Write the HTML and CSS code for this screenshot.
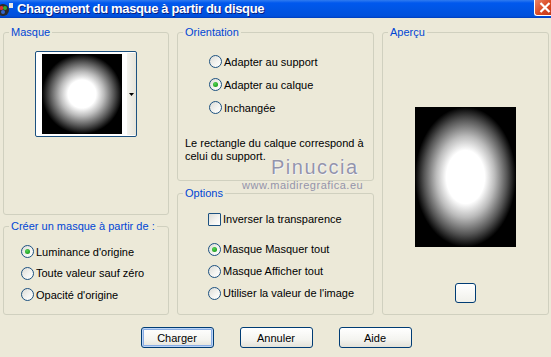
FILE: index.html
```html
<!DOCTYPE html>
<html lang="fr">
  <head>
    <meta charset="UTF-8" />
    <title>Chargement du masque à partir du disque</title>
    <link rel="stylesheet" href="styles.css">
  </head>
  <body>
    <div class="window">
      <div class="titlebar">
        <svg class="app-icon" width="15" height="15" viewBox="0 0 15 15">
          <circle cx="5" cy="8" r="6" fill="#2a2a2a" />
          <circle cx="3.5" cy="6" r="2" fill="#d33" />
          <circle cx="7" cy="6" r="2" fill="#3a3" />
          <circle cx="5" cy="10" r="2" fill="#36c" />
          <rect x="11" y="1" width="4" height="5" fill="#e8e8e8" />
        </svg>
        <span class="title">Chargement du masque à partir du disque</span>
        <div class="close-btn">
          <svg width="12" height="11" viewBox="0 0 12 11">
            <path d="M1.5 1 L10.5 10 M10.5 1 L1.5 10" stroke="#fff" stroke-width="2.2" />
          </svg>
        </div>
      </div>

      <div class="dialog">
        <div class="columns">
          <!-- left column -->
          <div class="col col-left">
            <fieldset class="group group-masque">
              <legend>Masque</legend>
              <div class="mask-picker">
                <div class="mask-thumb"></div>
                <div class="mask-drop">
                  <svg width="5" height="3" viewBox="0 0 5 3"><path d="M0 0 H5 L2.5 3 Z" fill="#000" /></svg>
                </div>
              </div>
            </fieldset>
            <fieldset class="group group-source">
              <legend>Créer un masque à partir de :</legend>
              <div class="group-body">
                <label class="option"><span class="radio checked"></span>Luminance d'origine</label>
                <label class="option"><span class="radio"></span>Toute valeur sauf zéro</label>
                <label class="option"><span class="radio"></span>Opacité d'origine</label>
              </div>
            </fieldset>
          </div>

          <!-- middle column -->
          <div class="col col-mid">
            <fieldset class="group group-orient">
              <legend>Orientation</legend>
              <div class="group-body">
                <label class="option"><span class="radio"></span>Adapter au support</label>
                <label class="option"><span class="radio checked"></span>Adapter au calque</label>
                <label class="option"><span class="radio"></span>Inchangée</label>
              </div>
              <p class="note">Le rectangle du calque correspond à<br>celui du support.</p>
            </fieldset>
            <fieldset class="group group-options">
              <legend>Options</legend>
              <div class="group-body">
                <label class="option option-check"><span class="checkbox"></span>Inverser la transparence</label>
                <label class="option"><span class="radio checked"></span>Masque Masquer tout</label>
                <label class="option"><span class="radio"></span>Masque Afficher tout</label>
                <label class="option"><span class="radio"></span>Utiliser la valeur de l'image</label>
              </div>
            </fieldset>
          </div>

          <!-- right column -->
          <div class="col col-right">
            <fieldset class="group group-preview">
              <legend>Aperçu</legend>
              <div class="preview"></div>
              <button class="tiny-btn"></button>
            </fieldset>
          </div>
        </div>

        <div class="actions">
          <button class="xp-btn default">Charger</button>
          <button class="xp-btn">Annuler</button>
          <button class="xp-btn">Aide</button>
        </div>
      </div>

      <div class="watermark">
        <div class="wm-name">Pinuccia</div>
        <div class="wm-url">www.maidiregrafica.eu</div>
      </div>
    </div>
  </body>
</html>
```

FILE: styles.css
```css
:root {
  --face: #ece9d8;
  --group-line: #d0d0bf;
  --legend-blue: #0046d5;
  --ctl-border: #1c5180;
  --btn-border: #003c74;
  --ui-font: "Liberation Sans", Arial, sans-serif;
}

html,
body {
  margin: 0;
  padding: 0;
}

body {
  width: 551px;
  height: 357px;
  overflow: hidden;
  background-color: var(--face);
  font-family: var(--ui-font);
  font-size: 11px;
  color: #000;
}

.window {
  position: relative;
  height: 357px;
}

/* Title bar */
.titlebar {
  height: 18px;
  display: flex;
  align-items: flex-start;
  background: linear-gradient(#2f7bf0 0, #0058ee 3px, #0055e5 50%, #0050dc 90%, #003dbb 100%);
  color: #fff;
}

.app-icon {
  margin: 2px 0 0 -2px;
  flex: none;
}

.title {
  margin: 1px 0 0 4px;
  font-weight: bold;
  font-size: 13px;
  line-height: 16px;
  letter-spacing: -0.35px;
  text-shadow: 1px 1px 0 #0a1e80;
  white-space: nowrap;
}

.close-btn {
  flex: none;
  margin-left: auto;
  width: 17px;
  height: 16px;
  box-sizing: border-box;
  padding: 2px 0 0 4px;
  background: #d9471f linear-gradient(135deg, #ea8466, #da4a24 55%, #c2381a);
  border-left: 1px solid #fff;
  border-bottom: 1px solid #fff;
  border-bottom-left-radius: 3px;
}

.close-btn svg {
  display: block;
}

/* Dialog body */
.dialog {
  padding: 8px 2px 0 3px;
}

.columns {
  display: flex;
  gap: 8px;
  height: 289px;
}

.col {
  display: flex;
  flex-direction: column;
}

.col-left {
  width: 166px;
  gap: 5px;
}

.col-mid {
  width: 197px;
  gap: 6px;
}

.col-right {
  width: 167px;
}

.group {
  margin: 0;
  padding: 0;
  border: 1px solid var(--group-line);
  border-radius: 3px;
  min-width: 0;
  box-sizing: border-box;
}

.group legend {
  margin-left: 5px;
  padding: 0 2px;
  line-height: 13px;
  color: var(--legend-blue);
  white-space: nowrap;
}

.group-masque {
  height: 189px;
}

.group-source {
  flex: 1;
}

.group-source .group-body {
  padding: 8px 0 0 17px;
}

.group-orient {
  height: 155px;
}

.group-orient .group-body {
  padding: 11px 0 0 31px;
}

.group-options {
  flex: 1;
}

.group-options .group-body {
  padding: 8px 0 0 30px;
}

.group-preview {
  flex: 1;
  display: flex;
  flex-direction: column;
  align-items: center;
}

/* Options (radios, checkbox) */
.option {
  display: flex;
  align-items: center;
  height: 22px;
  white-space: nowrap;
}

.group-source .option {
  height: 21.5px;
}

.group-orient .option {
  height: 23px;
}

.option-check {
  margin-bottom: 8px;
}

.radio,
.checkbox {
  flex: none;
  width: 13px;
  height: 13px;
  box-sizing: border-box;
  border: 1px solid var(--ctl-border);
  margin-right: 2px;
  background: linear-gradient(135deg, #dcdcd7 0%, #f5f5f2 60%, #fff 100%);
  position: relative;
}

.radio {
  border-radius: 50%;
}

.radio.checked::after {
  content: "";
  position: absolute;
  left: 3px;
  top: 3px;
  width: 5px;
  height: 5px;
  border-radius: 50%;
  background: radial-gradient(circle at 40% 35%, #55d455, #21a121 70%);
}

.checkbox {
  border-radius: 1px;
}

.note {
  margin: 18px 0 0 7px;
  line-height: 13px;
}

/* Mask picker */
.mask-picker {
  display: flex;
  width: 102px;
  height: 86px;
  margin: 12px auto 0;
  box-sizing: border-box;
  border: 1px solid var(--ctl-border);
  border-radius: 2px;
  background-color: #fff;
  padding: 2px 0 0 6px;
}

.mask-thumb {
  width: 80px;
  height: 80px;
  background: radial-gradient(circle closest-side, #fff 35%, #bbb 55%, #555 80%, #000 100%);
}

.mask-drop {
  margin-left: 5px;
  width: 9px;
  height: 82px;
  margin-top: -1px;
  background: linear-gradient(90deg, #f4f3ee, #e6e4da);
  display: flex;
  align-items: center;
  justify-content: center;
}

/* Preview */
.preview {
  margin-top: 68px;
  width: 101px;
  height: 140px;
  background: radial-gradient(ellipse closest-side, #fff 38%, #bbb 58%, #555 82%, #000 100%);
}

.tiny-btn {
  margin-top: 36px;
  width: 21px;
  height: 20px;
  padding: 0;
  border: 1px solid var(--btn-border);
  border-radius: 3px;
  background: linear-gradient(#fff, #f0f0ea);
}

/* Buttons */
.actions {
  display: flex;
  justify-content: center;
  gap: 26px;
  margin-top: 12px;
}

.xp-btn {
  width: 73px;
  height: 21px;
  padding: 0;
  font-family: var(--ui-font);
  font-size: 11px;
  color: #000;
  border: 1px solid var(--btn-border);
  border-radius: 3px;
  background: linear-gradient(#fff 0%, #f4f4f0 60%, #e3e2d8 100%);
}

.xp-btn.default {
  box-shadow: inset 0 0 0 1px #bcd4f6, inset 0 0 0 2px #89ade4;
}

/* Watermark */
.watermark {
  position: absolute;
  left: 242px;
  top: 155px;
  color: #9494ab;
  pointer-events: none;
  white-space: nowrap;
}

.wm-name {
  margin-left: 29px;
  font-size: 20px;
  line-height: 24px;
  letter-spacing: 1.5px;
  text-shadow: 0 0 1px #fff, 1px 1px 0 #f4f4f4;
}

.wm-url {
  font-size: 11px;
  line-height: 12px;
  letter-spacing: 0.5px;
}
```
